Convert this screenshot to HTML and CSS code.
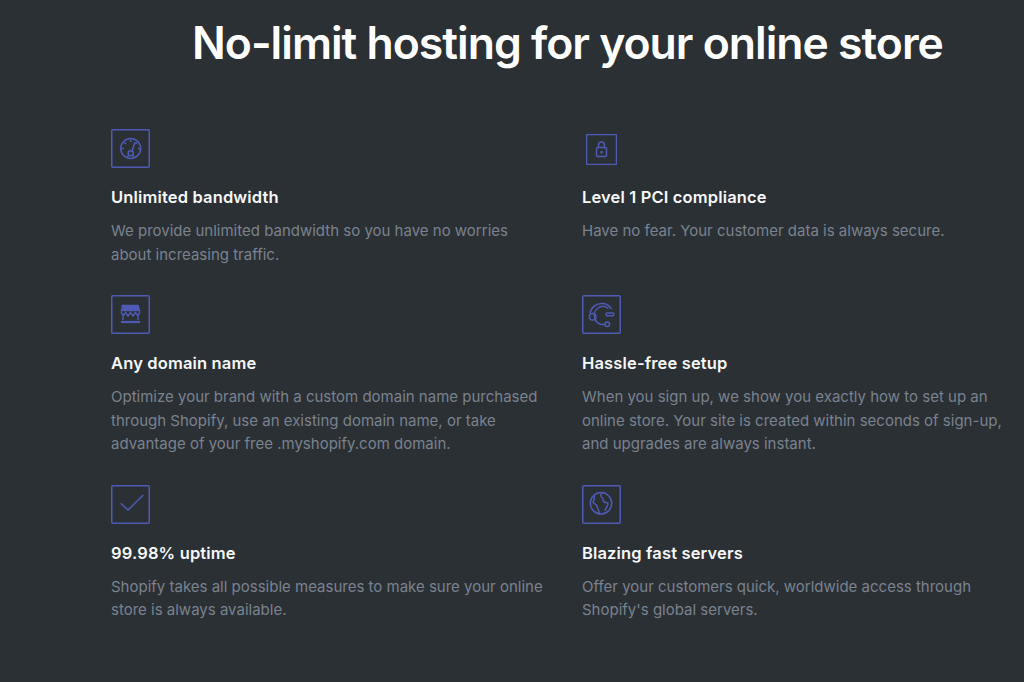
FILE: index.html
```html
<!DOCTYPE html>
<html lang="en">
<head>
<meta charset="utf-8">
<title>No-limit hosting</title>
<link rel="stylesheet" href="styles.css">
</head>
<body>
<main class="page">
  <h1 class="title">No-limit hosting for your online store</h1>
  <div class="grid">
    <section class="item">
      <div class="icon-slot"><svg class="icon" viewBox="0 0 39 39"><rect class="box" x="0.750" y="0.750" width="37.500" height="37.500" rx="1"/><circle cx="19.700" cy="19.500" r="10"/><path d="M19.700 10.500v2.500M10.500 19.500h2.500M27 19.500h2.500M13.500 13.500l1.500 1.500M26 13.500l-1.500 1.500M24 13l-3 9"/><circle cx="19.700" cy="24.300" r="2.500"/><path d="M16 29l1.500-3M23.500 29l-1.500-3"/></svg></div>
      <h2 class="name">Unlimited bandwidth</h2>
      <p class="text">We provide unlimited bandwidth so you have no worries about increasing traffic.</p>
    </section>
    <section class="item">
      <div class="icon-slot"><svg class="icon lock" viewBox="0 0 31 31"><rect class="box" x="0.500" y="0.500" width="30" height="30" rx="1"/><rect x="10.500" y="13.500" width="10" height="9" rx="1.500"/><path d="M12.500 13.500v-2.500a3 3 0 0 1 6 0v2.500"/><path class="thick" d="M15.500 17v2.500"/></svg></div>
      <h2 class="name">Level 1 PCI compliance</h2>
      <p class="text">Have no fear. Your customer data is always secure.</p>
    </section>
    <section class="item">
      <div class="icon-slot"><svg class="icon" viewBox="0 0 39 39"><rect class="box" x="0.750" y="0.750" width="37.500" height="37.500" rx="1"/><path class="fill" d="M11.500 10.500h15.500l1.500 5h-18z"/><path d="M10 16.500l2 4.500 2.500-3.500 2.500 3.500 2.500-3.500 2.500 3.500 2.500-3.500 2.500 3.500 2-4.500"/><path d="M12 22v3M27 22v3"/><path class="thick" d="M10 27h19"/></svg></div>
      <h2 class="name">Any domain name</h2>
      <p class="text">Optimize your brand with a custom domain name purchased through Shopify, use an existing domain name, or take advantage of your free .myshopify.com domain.</p>
    </section>
    <section class="item">
      <div class="icon-slot"><svg class="icon" viewBox="0 0 39 39"><rect class="box" x="0.750" y="0.750" width="37.500" height="37.500" rx="1"/><path d="M8 18.500C9 12 14 8.500 20 8.500c4 0 7.500 2 9.500 5.500"/><path d="M26.500 13.500C23 11 19 10.500 16 13c-3.500 2.500-4.500 7-3 11 1.500 4 5.500 6 10 5.500"/><circle cx="10.700" cy="21.700" r="3.300"/><circle cx="25.300" cy="29.300" r="2.300"/><rect x="24" y="18" width="7.700" height="2.700" rx="1"/></svg></div>
      <h2 class="name">Hassle-free setup</h2>
      <p class="text">When you sign up, we show you exactly how to set up an online store. Your site is created within seconds of sign-up, and upgrades are always instant.</p>
    </section>
    <section class="item">
      <div class="icon-slot"><svg class="icon" viewBox="0 0 39 39"><rect class="box" x="0.750" y="0.750" width="37.500" height="37.500" rx="1"/><path d="M9.700 18.300l7.300 6.700 15.300-15"/></svg></div>
      <h2 class="name">99.98% uptime</h2>
      <p class="text">Shopify takes all possible measures to make sure your online store is always available.</p>
    </section>
    <section class="item">
      <div class="icon-slot"><svg class="icon" viewBox="0 0 39 39"><rect class="box" x="0.750" y="0.750" width="37.500" height="37.500" rx="1"/><circle cx="19" cy="18.300" r="10.700"/><path d="M12 10.500c1.500 3-.5 4.500-1 7 2 1.500 4 2 4.500 5 .3 2 1.500 3 2 5.500"/><path d="M20 8c-2 2-1 4 .5 5 1 1 0 3 1.500 4 2 1 3.500 0 4 1.500.5 1.500-2.500 4.500-3 7.500"/></svg></div>
      <h2 class="name">Blazing fast servers</h2>
      <p class="text">Offer your customers quick, worldwide access through Shopify's global servers.</p>
    </section>
  </div>
</main>
</body>
</html>
```
FILE: styles.css
```css
* { box-sizing: border-box; }
html, body { margin: 0; height: 100%; }
body {
  background: #2b3035;
  font-family: Inter, "Liberation Sans", sans-serif;
  overflow: hidden;
}
.page { padding: 16px 0 0 111px; width: 1024px; height: 682px; }
.title {
  margin: 0 0 59px 81px;
  font-size: 44.500px;
  line-height: 54px;
  font-weight: 600;
  color: #fff;
  letter-spacing: -1px;
  white-space: nowrap;
}
.grid {
  display: grid;
  grid-template-columns: 471px 424px;
  row-gap: 29.200px;
  align-content: start;
}
.item { padding-right: 39px; }
.item:nth-child(even) { padding-right: 0; }
.icon-slot { width: 40px; height: 40px; display: flex; align-items: flex-start; }
.icon { width: 39px; height: 39px; fill: none; stroke: #4e5ab4; stroke-width: 1.500; display: block; }
.icon.lock { width: 31px; height: 31px; margin: 5px 0 0 4px; }
.box { stroke-width: 1.500; }
.thick { stroke-width: 2.200; }
.fill { fill: #4e5ab4; }
.name {
  margin: 18px 0 0;
  font-size: 16.500px;
  line-height: 20px;
  font-weight: 600;
  letter-spacing: 0.150px;
  color: #f6f7f8;
}
.text {
  margin: 12px 0 0;
  font-size: 15px;
  line-height: 23.500px;
  color: #7a828e;
}
```
